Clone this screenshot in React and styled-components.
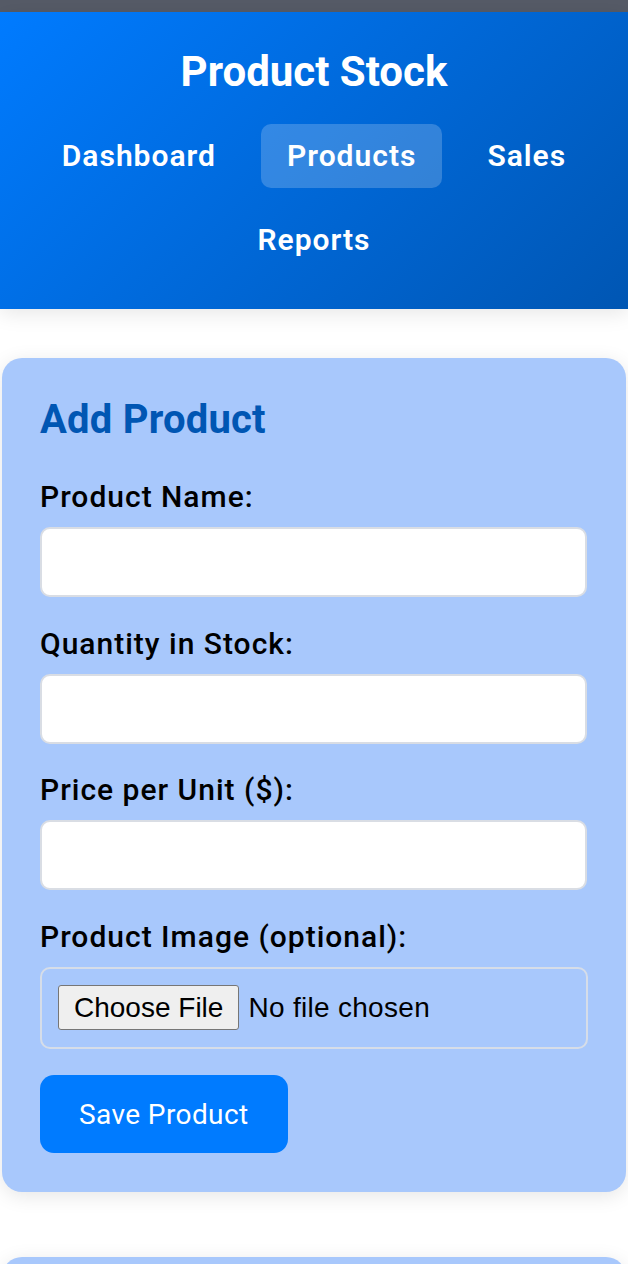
import styled, { createGlobalStyle } from "styled-components";

const GlobalStyle = createGlobalStyle`
  * { box-sizing: border-box; }
  body {
    margin: 0;
    background: #fff;
    font-family: Roboto, "Liberation Sans", Arial, sans-serif;
    color: #000;
  }
`;

const TopBar = styled.div`
  height: 12px;
  background: #565b67;
`;

const Header = styled.header`
  background: linear-gradient(135deg, #007bff 0%, #0056b3 100%);
  color: #fff;
  padding: 35px 20px 37px;
  text-align: center;
  box-shadow: 0 4px 20px rgba(0, 0, 0, 0.1);
  position: relative;
`;

const Title = styled.h1`
  margin: 0 0 27px;
  font-size: 42px;
  line-height: 1.2;
  font-weight: 700;
`;

const Nav = styled.nav`
  display: flex;
  flex-wrap: wrap;
  justify-content: center;
  gap: 20px 19px;
`;

const NavLink = styled.a`
  display: block;
  padding: 14px 26px;
  font-size: 30px;
  line-height: 36px;
  font-weight: 600;
  letter-spacing: 1px;
  color: #fff;
  text-decoration: none;
  border-radius: 10px;
  background: ${(p) => (p.$active ? "rgba(255, 255, 255, 0.2)" : "transparent")};
`;

const Main = styled.main`
  padding: 49px 2px 40px;
  display: flex;
  flex-direction: column;
  gap: 65px;
`;

const Card = styled.section`
  background: #a8c8fc;
  border-radius: 20px;
  padding: 38px 38px 39px;
  box-shadow: 0 4px 20px rgba(0, 0, 0, 0.1);
`;

const CardTitle = styled.h2`
  margin: 0 0 36px;
  font-size: 40px;
  line-height: 1.2;
  font-weight: 700;
  letter-spacing: 0.2px;
  color: #0056b3;
`;

const Form = styled.form`
  display: flex;
  flex-direction: column;
  gap: 29.5px;
`;

const Field = styled.div`
  display: flex;
  flex-direction: column;
  gap: 14px;
`;

const Label = styled.label`
  font-size: 30px;
  line-height: 33px;
  font-weight: 500;
  letter-spacing: 1px;
  color: #000;
`;

const TextInput = styled.input`
  width: 547px;
  height: 70px;
  padding: 0 16px;
  font-size: 28px;
  font-family: inherit;
  background: #fff;
  border: 2px solid #d9dde4;
  border-radius: 10px;
  outline: none;
`;

const FileBox = styled.div`
  width: 548px;
  height: 82px;
  padding: 16px;
  border: 2px solid #d6dde8;
  border-radius: 10px;
  display: flex;
  align-items: center;
`;

const FileInput = styled.input`
  font-family: "Liberation Sans", Arial, sans-serif;
  font-size: 28px;
  letter-spacing: 0.3px;
  color: #000;

  &::file-selector-button {
    font-family: "Liberation Sans", Arial, sans-serif;
    font-size: 28px;
    letter-spacing: 0;
    height: 45px;
    padding: 0 15px;
    margin-right: 9px;
    background: #efefef;
    border: 1px solid #767676;
    border-radius: 3px;
    color: #000;
  }
`;

const SaveButton = styled.button`
  align-self: flex-start;
  margin-top: -3px;
  height: 78px;
  padding: 0 39px;
  font-family: Roboto, "Liberation Sans", sans-serif;
  font-size: 28px;
  font-weight: 400;
  letter-spacing: 0.4px;
  color: #fff;
  background: #007bff;
  border: none;
  border-radius: 14px;
`;

const ListText = styled.p`
  margin: 0;
  font-size: 28px;
`;

export default function App() {
  return (
    <>
      <GlobalStyle />
      <TopBar />
      <Header>
        <Title>Product Stock</Title>
        <Nav>
          <NavLink href="#">Dashboard</NavLink>
          <NavLink href="#" $active>Products</NavLink>
          <NavLink href="#">Sales</NavLink>
          <NavLink href="#">Reports</NavLink>
        </Nav>
      </Header>
      <Main>
        <Card>
          <CardTitle>Add Product</CardTitle>
          <Form onSubmit={(e) => e.preventDefault()}>
            <Field>
              <Label htmlFor="name">Product Name:</Label>
              <TextInput id="name" type="text" />
            </Field>
            <Field>
              <Label htmlFor="qty">Quantity in Stock:</Label>
              <TextInput id="qty" type="number" />
            </Field>
            <Field>
              <Label htmlFor="price">Price per Unit ($):</Label>
              <TextInput id="price" type="number" />
            </Field>
            <Field>
              <Label htmlFor="image">Product Image (optional):</Label>
              <FileBox>
                <FileInput id="image" type="file" />
              </FileBox>
            </Field>
            <SaveButton type="submit">Save Product</SaveButton>
          </Form>
        </Card>
        <Card>
          <CardTitle>Product List</CardTitle>
          <ListText>No products yet.</ListText>
        </Card>
      </Main>
    </>
  );
}
